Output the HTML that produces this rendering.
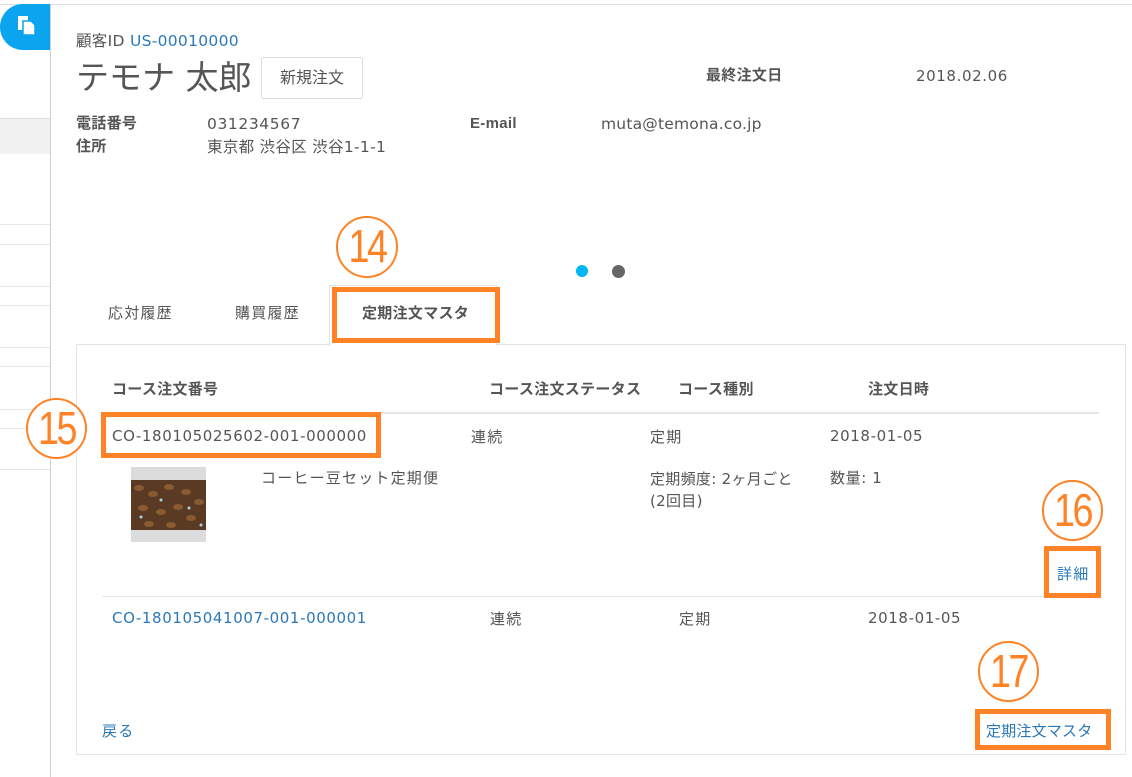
<!DOCTYPE html>
<html><head><meta charset="utf-8"><style>
*{margin:0;padding:0;box-sizing:border-box}
body{width:1132px;height:777px;background:#fff;position:relative;overflow:hidden;font-family:"DejaVu Sans","Noto Sans CJK JP",sans-serif;color:#555;font-size:15px;letter-spacing:0.6px}
.a{position:absolute;white-space:nowrap;line-height:20px}
.hl{position:absolute;left:0;width:50px;height:1px;background:#e6e6e6}
.b{font-weight:bold;color:#555;font-family:"Liberation Sans","Noto Sans CJK JP",sans-serif;font-size:15px;letter-spacing:0.3px}
.link{color:#2a78b8}
.circ{position:absolute;border:2px solid #ff8326;border-radius:50%;background:#fff}
.circ span{position:absolute;left:0;right:0;top:50%;text-align:center;color:#ff8326;font-family:"Liberation Sans",sans-serif;font-size:46px;line-height:46px;margin-top:-24px;letter-spacing:-3px;transform:scaleX(.82)}
.ob{position:absolute;border:5px solid #ff8326}
.j{letter-spacing:1.2px}
</style></head><body>
<div class="a" style="left:0;top:4px;width:1132px;height:1px;background:#ddd"></div>
<div class="a" style="left:50px;top:4px;width:1px;height:773px;background:#d0d0d0"></div>
<div class="a" style="left:0;top:4px;width:50px;height:46px;background:#0aa4ef;border-radius:23px 0 0 23px"></div>
<svg class="a" style="left:16px;top:14px" width="22" height="22" viewBox="0 0 22 22"><rect x="2" y="2" width="10" height="14" fill="#fff"/><path d="M7 7h8l4 4v10H7z" fill="#fff" stroke="#0aa4ef" stroke-width="1.5"/></svg>
<div class="a" style="left:0;top:118px;width:50px;height:36px;background:#f1f1f1;border-top:1px solid #ddd"></div>
<div class="hl" style="top:224px"></div><div class="hl" style="top:244px"></div>
<div class="hl" style="top:286px"></div><div class="hl" style="top:305px"></div>
<div class="hl" style="top:347px"></div><div class="hl" style="top:366px"></div>
<div class="hl" style="top:409px"></div><div class="hl" style="top:428px"></div>
<div class="hl" style="top:469px"></div>

<div class="a" style="left:76px;top:31px;font-size:15.5px;letter-spacing:0.3px">顧客ID <span class="link">US-00010000</span></div>
<div class="a" style="left:76px;top:58px;font-size:33px;line-height:40px;color:#555;letter-spacing:0">テモナ 太郎</div>
<div class="a" style="left:261px;top:57px;width:102px;height:42px;border:1px solid #ddd;border-radius:3px;text-align:center;line-height:40px;font-size:16px;letter-spacing:0">新規注文</div>
<div class="a b" style="left:706px;top:66px">最終注文日</div>
<div class="a" style="left:916px;top:66px">2018.02.06</div>
<div class="a b" style="left:76px;top:114px">電話番号</div>
<div class="a" style="left:207px;top:114px;font-size:15.5px">031234567</div>
<div class="a b" style="left:470px;top:114px">E-mail</div>
<div class="a" style="left:601px;top:114px;font-size:15.5px;letter-spacing:0.2px">muta@temona.co.jp</div>
<div class="a b" style="left:76px;top:137px">住所</div>
<div class="a" style="left:207px;top:137px;font-size:15.5px;letter-spacing:0.3px">東京都 渋谷区 渋谷1-1-1</div>

<div class="a" style="left:576px;top:265px;width:12px;height:12px;border-radius:50%;background:#00b6f5"></div>
<div class="a" style="left:612px;top:265px;width:13px;height:13px;border-radius:50%;background:#666"></div>

<div class="a j" style="left:108px;top:303px">応対履歴</div>
<div class="a j" style="left:235px;top:303px">購買履歴</div>
<div class="a" style="left:76px;top:344px;width:1050px;height:411px;border:1px solid #e4e4e4"></div>
<div class="a" style="left:329px;top:285px;width:168px;height:61px;background:#fff;border:1px solid #e4e4e4;border-bottom:none"></div>
<div class="ob" style="left:332px;top:287px;width:168px;height:56px"></div>
<div class="a b" style="left:362px;top:304px">定期注文マスタ</div>
<div class="circ" style="left:336px;top:216px;width:62px;height:62px"><span>14</span></div>

<div class="a b" style="left:112px;top:380px">コース注文番号</div>
<div class="a b" style="left:489px;top:380px">コース注文ステータス</div>
<div class="a b" style="left:678px;top:380px">コース種別</div>
<div class="a b" style="left:868px;top:380px">注文日時</div>
<div class="a" style="left:102px;top:412px;width:997px;height:2px;background:#e6e6e6"></div>

<div class="ob" style="left:101px;top:412px;width:280px;height:46px"></div>
<div class="a" style="left:112px;top:426px">CO-180105025602-001-000000</div>
<div class="circ" style="left:26px;top:398px;width:61px;height:61px"><span>15</span></div>
<div class="a j" style="left:471px;top:427px">連続</div>
<div class="a j" style="left:650px;top:427px">定期</div>
<div class="a" style="left:830px;top:426px">2018-01-05</div>

<div class="a" style="left:131px;top:467px;width:75px;height:75px;background:#dcdcdc"></div>
<svg class="a" style="left:131px;top:480px" width="75" height="50"><rect width="75" height="50" fill="#5a3a22"/><g fill="#8a5a34"><ellipse cx="8" cy="8" rx="5" ry="3"/><ellipse cx="22" cy="14" rx="5" ry="3"/><ellipse cx="38" cy="7" rx="5" ry="3"/><ellipse cx="55" cy="12" rx="5" ry="3"/><ellipse cx="68" cy="22" rx="5" ry="3"/><ellipse cx="12" cy="28" rx="5" ry="3"/><ellipse cx="30" cy="32" rx="5" ry="3"/><ellipse cx="47" cy="27" rx="5" ry="3"/><ellipse cx="60" cy="38" rx="5" ry="3"/><ellipse cx="18" cy="44" rx="5" ry="3"/><ellipse cx="40" cy="45" rx="5" ry="3"/></g><g fill="#9fd8e0"><circle cx="30" cy="20" r="1.5"/><circle cx="58" cy="28" r="1.5"/><circle cx="10" cy="37" r="1.5"/><circle cx="70" cy="45" r="1.5"/></g></svg>
<div class="a j" style="left:261px;top:468px">コーヒー豆セット定期便</div>
<div class="a" style="left:650px;top:468px;line-height:22px;letter-spacing:0.3px">定期頻度: 2ヶ月ごと<br>(2回目)</div>
<div class="a" style="left:830px;top:468px">数量: 1</div>

<div class="circ" style="left:1042px;top:480px;width:61px;height:61px"><span>16</span></div>
<div class="ob" style="left:1044px;top:546px;width:57px;height:52px"></div>
<div class="a link j" style="left:1057px;top:564px">詳細</div>
<div class="a" style="left:102px;top:596px;width:942px;height:1px;background:#e6e6e6"></div>

<div class="a link" style="left:112px;top:608px">CO-180105041007-001-000001</div>
<div class="a j" style="left:490px;top:609px">連続</div>
<div class="a j" style="left:679px;top:609px">定期</div>
<div class="a" style="left:868px;top:608px">2018-01-05</div>

<div class="circ" style="left:978px;top:641px;width:61px;height:61px"><span>17</span></div>
<div class="ob" style="left:975px;top:709px;width:136px;height:41px"></div>
<div class="a link" style="left:986px;top:721px;letter-spacing:0.2px">定期注文マスタ</div>
<div class="a link j" style="left:102px;top:721px">戻る</div>
</body></html>
